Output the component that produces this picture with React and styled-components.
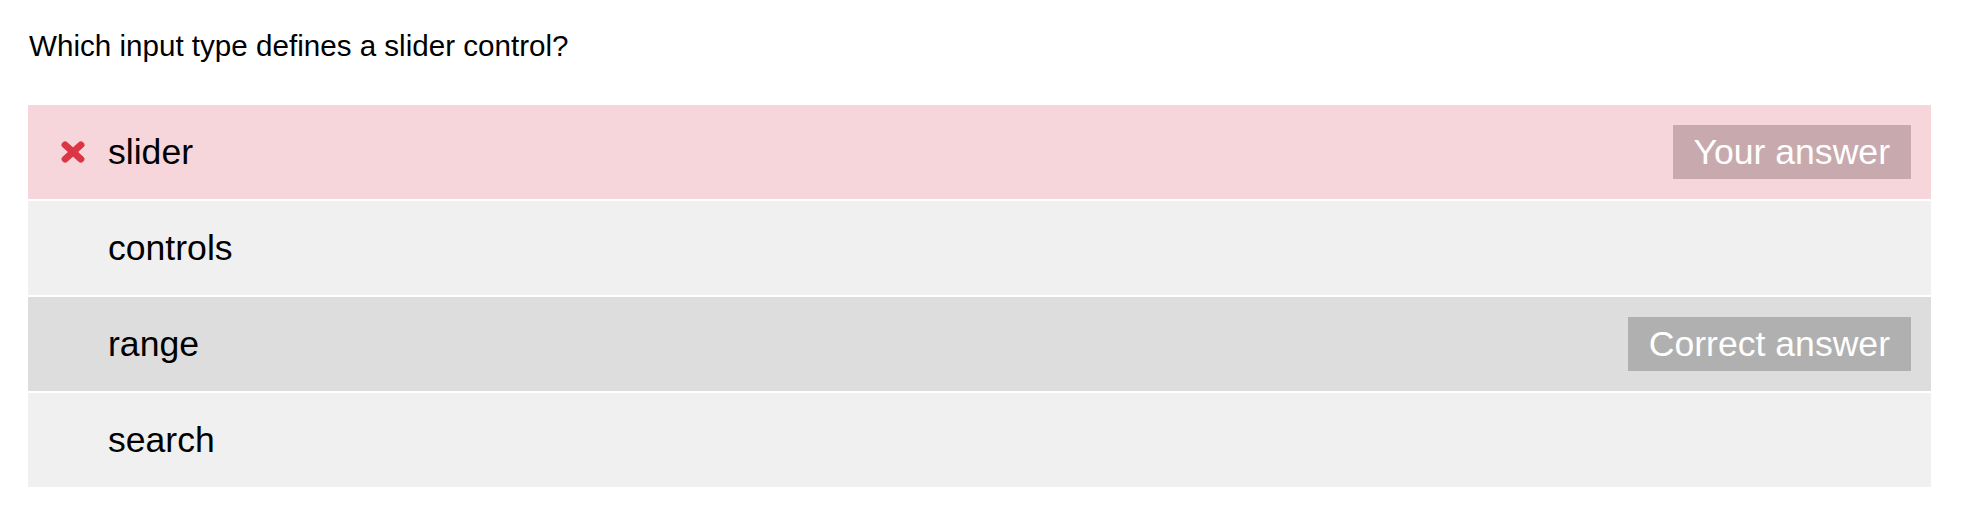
import React from "react";
import styled, { createGlobalStyle } from "styled-components";

const GlobalStyle = createGlobalStyle`
  html, body {
    margin: 0;
    padding: 0;
    background: #ffffff;
  }
  body {
    font-family: "Liberation Sans", Arial, Helvetica, sans-serif;
    color: #000000;
  }
`;

const Page = styled.div`
  padding: 29px 35px 0 28px;
`;

const Question = styled.p`
  margin: 0 0 42px 1px;
  font-size: 29.6px;
  line-height: 34px;
`;

const Options = styled.div`
  display: flex;
  flex-direction: column;
  gap: 2px;
`;

const rowColors = {
  wrong: "#f7d6db",
  correct: "#dddddd",
  plain: "#f0f0f0",
};

const Row = styled.div`
  display: flex;
  align-items: center;
  height: 94px;
  padding: 0 20px 0 0;
  background: ${(p) => rowColors[p.$state]};
`;

const IconCell = styled.span`
  width: 80px;
  display: flex;
  align-items: center;
  justify-content: center;
  padding-left: 9px;
  box-sizing: border-box;
`;

const Label = styled.span`
  flex: 1;
  font-size: 35.6px;
  line-height: 41px;
`;

const badgeColors = {
  wrong: "#c8aaae",
  correct: "#b0b0b0",
};

const Badge = styled.span`
  display: inline-flex;
  align-items: center;
  height: 54px;
  padding: 0 21px;
  background: ${(p) => badgeColors[p.$state]};
  color: #ffffff;
  font-size: 35.6px;
  line-height: 41px;
`;

const CrossIcon = () => (
  <svg width="24" height="22" viewBox="0 0 24 22" aria-hidden="true">
    <g fill="#dc3545">
      <rect x="-2" y="7.5" width="28" height="7" rx="3.2" transform="rotate(42 12 11)" />
      <rect x="-2" y="7.5" width="28" height="7" rx="3.2" transform="rotate(-42 12 11)" />
    </g>
  </svg>
);

const options = [
  { text: "slider", state: "wrong", badge: "Your answer" },
  { text: "controls", state: "plain" },
  { text: "range", state: "correct", badge: "Correct answer" },
  { text: "search", state: "plain" },
];

export default function App() {
  return (
    <>
      <GlobalStyle />
      <Page>
        <Question>Which input type defines a slider control?</Question>
        <Options>
          {options.map((o) => (
            <Row key={o.text} $state={o.state}>
              <IconCell>{o.state === "wrong" ? <CrossIcon /> : null}</IconCell>
              <Label>{o.text}</Label>
              {o.badge ? <Badge $state={o.state}>{o.badge}</Badge> : null}
            </Row>
          ))}
        </Options>
      </Page>
    </>
  );
}
